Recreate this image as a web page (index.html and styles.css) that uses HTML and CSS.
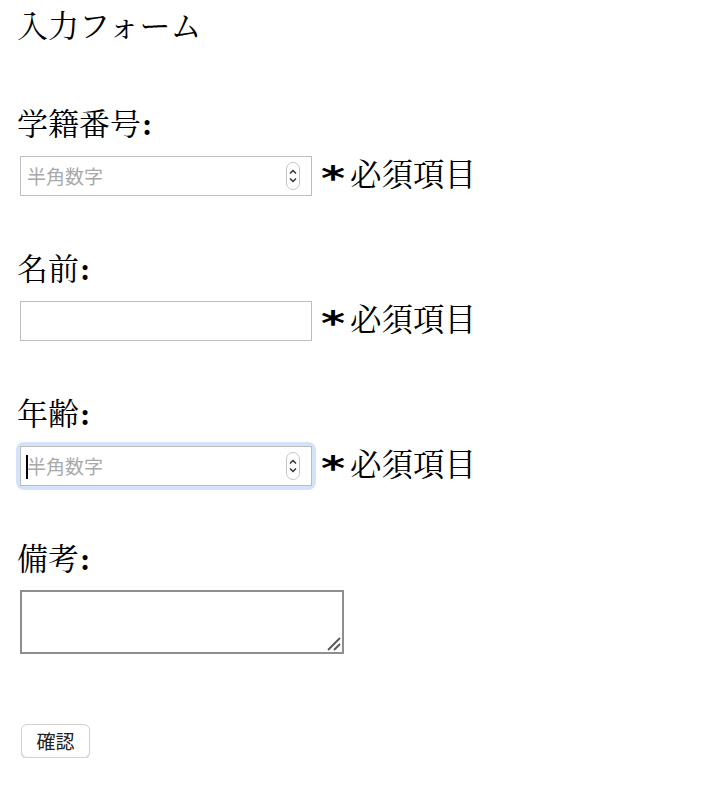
FILE: index.html
```html
<!DOCTYPE html>
<html lang="ja">
<head>
<meta charset="utf-8">
<title>入力フォーム</title>
<link rel="stylesheet" href="styles.css">
</head>
<body>
<div class="title">入力フォーム</div>
<form class="form">
  <div class="field">
    <label class="label" for="sid">学籍番号<b class="colon">:</b></label>
    <div class="row">
      <span class="numwrap">
        <input class="input" id="sid" type="text" placeholder="半角数字">
        <span class="spin"><svg width="14" height="28" viewBox="0 0 14 28"><rect x="0.5" y="0.5" width="13" height="27" rx="6.5" fill="#fff" stroke="#c4c4c4"/><path d="M4 11.5 L7 8.5 L10 11.5" fill="none" stroke="#333" stroke-width="1.5"/><path d="M4 16.5 L7 19.5 L10 16.5" fill="none" stroke="#333" stroke-width="1.5"/></svg></span>
      </span>
      <span class="req"><span class="ast">*</span>必須項目</span>
    </div>
  </div>
  <div class="field">
    <label class="label" for="name">名前<b class="colon">:</b></label>
    <div class="row">
      <span class="numwrap">
        <input class="input" id="name" type="text">
      </span>
      <span class="req"><span class="ast">*</span>必須項目</span>
    </div>
  </div>
  <div class="field">
    <label class="label" for="age">年齢<b class="colon">:</b></label>
    <div class="row">
      <span class="numwrap focused">
        <input class="input" id="age" type="text" placeholder="半角数字">
        <span class="caret"></span>
        <span class="spin"><svg width="14" height="28" viewBox="0 0 14 28"><rect x="0.5" y="0.5" width="13" height="27" rx="6.5" fill="#fff" stroke="#c4c4c4"/><path d="M4 11.5 L7 8.5 L10 11.5" fill="none" stroke="#333" stroke-width="1.5"/><path d="M4 16.5 L7 19.5 L10 16.5" fill="none" stroke="#333" stroke-width="1.5"/></svg></span>
      </span>
      <span class="req"><span class="ast">*</span>必須項目</span>
    </div>
  </div>
  <div class="field last">
    <label class="label" for="note">備考<b class="colon">:</b></label>
    <div class="row">
      <span class="tawrap">
        <textarea class="ta" id="note"></textarea>
        <svg class="grip" width="14" height="14" viewBox="0 0 14 14"><path d="M1 13 L13 1 M7 13 L13 7" stroke="#555" stroke-width="1.8"/></svg>
      </span>
    </div>
  </div>
  <button class="btn" type="button">確認</button>
</form>
</body>
</html>
```
FILE: styles.css
```css
html, body {
  margin: 0;
  padding: 0;
  background: #fff;
}
body {
  padding: 7px 0 0 17px;
  font-family: "Liberation Serif", "Noto Serif CJK JP", "Noto Sans CJK JP", serif;
  color: #000;
}
.title {
  font-size: 31px;
  line-height: 40px;
  height: 40px;
}
.form {
  margin: 58px 0 0 0;
}
.field {
  margin-bottom: 54px;
}
.field.last {
  margin-bottom: 70px;
}
.label {
  display: block;
  font-size: 31px;
  line-height: 40px;
  height: 40px;
}
.colon {
  font-weight: bold;
  margin-left: 1px;
}
.row {
  display: flex;
  align-items: center;
  margin-top: 11px;
  padding-left: 3px;
}
.field.last .row {
  margin-top: 10px;
}
.numwrap {
  position: relative;
  display: block;
  width: 292px;
  height: 40px;
}
.numwrap.focused {
  box-shadow: 0 0 0 4px #d3e3fa;
  border-radius: 4px;
}
.input {
  box-sizing: border-box;
  display: block;
  width: 292px;
  height: 40px;
  margin: 0;
  border: 1px solid #bdbdbd;
  border-radius: 0;
  padding: 0 0 2px 6px;
  font-family: "Noto Sans CJK JP", sans-serif;
  font-size: 19px;
  color: #000;
  background: #fff;
  outline: none;
}
.input::placeholder {
  color: #a9a9a9;
}
.spin {
  position: absolute;
  right: 12px;
  top: 6px;
  width: 14px;
  height: 28px;
  line-height: 0;
}
.caret {
  position: absolute;
  left: 6px;
  top: 9px;
  width: 2px;
  height: 24px;
  background: #000;
}
.req {
  display: flex;
  align-items: center;
  margin-left: 9px;
  font-size: 31.5px;
  line-height: 40px;
  white-space: nowrap;
}
.ast {
  display: block;
  font-family: "DejaVu Sans", sans-serif;
  font-weight: bold;
  font-size: 46px;
  line-height: 40px;
  height: 40px;
  padding-top: 3px;
  box-sizing: border-box;
  transform: scaleY(0.72);
  margin-right: 5px;
}
.tawrap {
  position: relative;
  display: block;
  width: 324px;
  height: 64px;
}
.ta {
  box-sizing: border-box;
  display: block;
  width: 324px;
  height: 64px;
  margin: 0;
  border: 2px solid #8e8e8e;
  padding: 4px;
  resize: none;
  outline: none;
  background: #fff;
}
.grip {
  position: absolute;
  right: 3px;
  bottom: 3px;
}
.btn {
  display: block;
  margin-left: 4px;
  box-sizing: border-box;
  width: 69px;
  height: 34px;
  padding: 0 0 1px 0;
  border: 1px solid #d0d0d0;
  border-radius: 6px;
  background: #fff;
  box-shadow: 0 1px 1px rgba(0,0,0,0.15);
  font-family: "Noto Sans CJK JP", sans-serif;
  font-size: 19px;
  color: #222;
}
```
